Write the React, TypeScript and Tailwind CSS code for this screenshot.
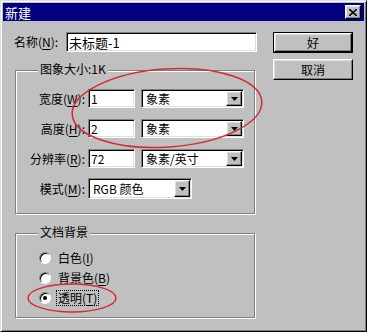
import React from 'react'

// win98-ish bevels
const sunken =
  'border border-t-[#808080] border-l-[#808080] border-r-white border-b-white shadow-[inset_1px_1px_0_#000,inset_-1px_-1px_0_#dfdfdf]'
const raised =
  'border border-t-white border-l-white border-r-black border-b-black shadow-[inset_-1px_-1px_0_#808080,inset_1px_1px_0_#dfdfdf]'
const etched =
  'border border-[#808080] shadow-[inset_1px_1px_0_#fff,1px_1px_0_#fff]'

const Key: React.FC<{ k: string }> = ({ k }) => (
  <>
    (<u className="underline-offset-2">{k}</u>)
  </>
)

const Arrow = () => (
  <div className={`${raised} w-[16px] h-full bg-[#c0c0c0] flex items-center justify-center`}>
    <svg width="7" height="4" viewBox="0 0 7 4">
      <polygon points="0,0 7,0 3.5,4" fill="#000" />
    </svg>
  </div>
)

const Select: React.FC<{ value: string; width: string; height?: string }> = ({
  value,
  width,
  height = 'h-[19px]',
}) => (
  <div className={`${sunken} ${width} ${height} bg-white flex items-stretch p-[1px]`}>
    <span className="flex-1 pl-[3px] flex items-center leading-none">{value}</span>
    <Arrow />
  </div>
)

const Field: React.FC<{ label: React.ReactNode; value: string; unit: string }> = ({
  label,
  value,
  unit,
}) => (
  <div className="flex items-center h-[19px]">
    <div className="w-[72px] text-right pr-[3px]">{label}</div>
    <div className={`${sunken} w-[47px] h-[19px] bg-white pl-[2px] flex items-center leading-none`}>
      {value}
    </div>
    <div className="ml-[6px]">
      <Select value={unit} width="w-[103px]" />
    </div>
  </div>
)

const Radio: React.FC<{ checked?: boolean; label: React.ReactNode; focus?: boolean }> = ({
  checked,
  label,
  focus,
}) => (
  <div className="flex items-center h-[19px]">
    <div className="w-[12px] h-[12px] rounded-full bg-white border border-t-[#808080] border-l-[#808080] border-r-white border-b-white shadow-[inset_1px_1px_0_#000] flex items-center justify-center">
      {checked && <div className="w-[4px] h-[4px] rounded-full bg-black" />}
    </div>
    <span
      className={`ml-[6px] leading-none px-[1px] py-[1px] ${
        focus ? 'outline outline-1 outline-dotted outline-black' : ''
      }`}
    >
      {label}
    </span>
  </div>
)

export default function App() {
  return (
    <div
      className="relative w-[367px] h-[332px] bg-[#c0c0c0] text-[12px] text-black border border-t-[#dfdfdf] border-l-[#dfdfdf] border-r-black border-b-black shadow-[inset_1px_1px_0_#fff,inset_-1px_-1px_0_#808080] p-[2px] flex flex-col"
      style={{ fontFamily: '"Noto Sans CJK SC", "Liberation Sans", sans-serif' }}
    >
      {/* title bar */}
      <div className="h-[18px] bg-[#000080] flex items-center justify-between">
        <span className="pl-[2px] text-white text-[13px] leading-none">新建</span>
        <div className={`${raised} mr-[3px] w-[16px] h-[14px] bg-[#c0c0c0] flex items-center justify-center`}>
          <svg width="8" height="7" viewBox="0 0 8 7">
            <path d="M0 0 L8 7 M8 0 L0 7" stroke="#000" strokeWidth="1.6" />
          </svg>
        </div>
      </div>

      <div className="flex pl-[11px] pt-[11px]">
        {/* left column */}
        <div className="w-[243px] flex flex-col">
          <div className="flex items-center h-[20px]">
            <div className="w-[52px]">
              名称<Key k="N" />:
            </div>
            <div className={`${sunken} w-[191px] h-[20px] bg-white pl-[2px] flex items-center text-[13px] leading-none`}>
              未标题-1
            </div>
          </div>

          <div className={`${etched} relative ml-[1px] mt-[18px] w-[240px] h-[144px]`}>
            <span className="absolute -top-[8px] left-[22px] px-[2px] bg-[#c0c0c0] leading-none">
              图象大小:1K
            </span>
            <div className="flex flex-col pt-[18px] gap-[11px]">
              <Field label={<>宽度<Key k="W" />:</>} value="1" unit="象素" />
              <Field label={<>高度<Key k="H" />:</>} value="2" unit="象素" />
              <Field label={<>分辨率<Key k="R" />:</>} value="72" unit="象素/英寸" />
              <div className="flex items-center h-[21px] mt-[-1px]">
                <div className="w-[72px] text-right pr-[3px]">
                  模式<Key k="M" />:
                </div>
                <Select value="RGB 颜色" width="w-[104px]" height="h-[21px]" />
              </div>
            </div>
          </div>

          <div className={`${etched} relative ml-[1px] mt-[19px] w-[240px] h-[85px]`}>
            <span className="absolute -top-[8px] left-[22px] px-[2px] bg-[#c0c0c0] leading-none">
              文档背景
            </span>
            <div className="flex flex-col pl-[23px] pt-[14px] gap-[1px]">
              <Radio label={<>白色<Key k="I" /></>} />
              <Radio label={<>背景色<Key k="B" /></>} />
              <Radio checked focus label={<>透明<Key k="T" /></>} />
            </div>
          </div>
        </div>

        {/* buttons */}
        <div className="ml-[16px] flex flex-col gap-[6px]">
          <div className="border border-black">
            <div className={`${raised} w-[78px] h-[19px] bg-[#c0c0c0] flex items-center justify-center leading-none`}>
              好
            </div>
          </div>
          <div className={`${raised} w-[80px] h-[21px] bg-[#c0c0c0] flex items-center justify-center leading-none`}>
            取消
          </div>
        </div>
      </div>

      {/* red annotation ellipses */}
      <svg className="absolute left-0 top-0 pointer-events-none" width="367" height="332">
        <ellipse
          cx="166"
          cy="107"
          rx="95"
          ry="39"
          transform="rotate(-4 166 107)"
          fill="none"
          stroke="#d42a3a"
          strokeWidth="1.5"
        />
        <ellipse cx="71" cy="297" rx="44" ry="14" fill="none" stroke="#d42a3a" strokeWidth="1.5" />
      </svg>
    </div>
  )
}
